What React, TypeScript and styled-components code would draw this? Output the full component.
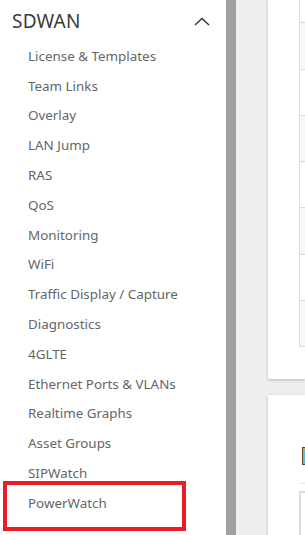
import React from "react";
import styled, { createGlobalStyle } from "styled-components";

const Global = createGlobalStyle`
  html, body { margin: 0; padding: 0; }
  body { font-family: "Noto Sans", "Open Sans", sans-serif; background: #fff; }
  * { box-sizing: border-box; }
`;

const Page = styled.div`
  display: flex;
  width: 305px;
  height: 535px;
  overflow: hidden;
`;

const Sidebar = styled.nav`
  width: 226px;
  flex: none;
  background: #fff;
  display: flex;
  flex-direction: column;
`;

const Header = styled.div`
  height: 41px;
  display: flex;
  align-items: center;
  justify-content: space-between;
  padding: 0 16px 0 12px;
  color: #3a3a3a;
  font-size: 19px;
  letter-spacing: 0.2px;
`;

const Item = styled.div<{ $highlight?: boolean }>`
  position: relative;
  height: 29.8px;
  display: flex;
  align-items: center;
  padding-left: 28px;
  font-size: 13.4px;
  color: #666;
  white-space: nowrap;
  ${(p) =>
    p.$highlight &&
    `
    &::after {
      content: "";
      position: absolute;
      left: 3px;
      width: 175px;
      top: -7px;
      height: 42px;
      border: 4px solid #e81d25;
    }
  `}
`;

const ScrollBar = styled.div`
  width: 10px;
  flex: none;
  background: #a0a0a0;
`;

const Main = styled.main`
  flex: 1;
  background: #eeeeee;
  padding-left: 32px;
  display: flex;
  flex-direction: column;
  gap: 16px;
  min-width: 0;
`;

const Card = styled.section<{ $top: number; $bottom: number; $grow?: boolean }>`
  background: #fff;
  box-shadow: 0 1px 3px rgba(0, 0, 0, 0.22);
  padding: ${(p) => p.$top}px 0 ${(p) => p.$bottom}px 31px;
  display: flex;
  flex-direction: column;
  flex: ${(p) => (p.$grow ? 1 : "none")};
`;

const Table = styled.div`
  border-left: 1px solid #dcdcdc;
  border-bottom: 1px solid #dcdcdc;
  display: flex;
  flex-direction: column;
`;

const Row = styled.div<{ $h: number; $shaded: boolean; $first?: boolean }>`
  height: ${(p) => p.$h}px;
  background: ${(p) => (p.$shaded ? "#f8f8f8" : "#fff")};
  border-top: ${(p) => (p.$first ? "none" : "1px solid #dcdcdc")};
`;

const TitleLine = styled.div`
  display: flex;
  align-items: center;
  height: 18px;
  padding-left: 3px;
  margin-bottom: 18px;
`;

const Divider = styled.div`
  height: 1px;
  background: #e4e4e4;
  margin-left: 1px;
  margin-bottom: 7px;
`;

const OpenTable = styled.div`
  border-left: 2px solid #dcdcdc;
  border-top: 2px solid #dcdcdc;
  height: 60px;
`;

const Chevron = () => (
  <svg width="16" height="9" viewBox="0 0 16 9" style={{ marginTop: 2 }}>
    <polyline points="1,8 8,1.5 15,8" fill="none" stroke="#333" strokeWidth="1.4" />
  </svg>
);

const Logo = () => (
  <svg width="12" height="18" viewBox="0 0 12 18" style={{ flex: "none" }}>
    <rect x="0" y="0" width="12" height="18" fill="#6b4420" />
    <rect x="1" y="1" width="11" height="16" fill="#e59a2e" />
    <rect x="2" y="2" width="10" height="14" fill="#58bde9" />
  </svg>
);

const items = [
  "License & Templates",
  "Team Links",
  "Overlay",
  "LAN Jump",
  "RAS",
  "QoS",
  "Monitoring",
  "WiFi",
  "Traffic Display / Capture",
  "Diagnostics",
  "4GLTE",
  "Ethernet Ports & VLANs",
  "Realtime Graphs",
  "Asset Groups",
  "SIPWatch",
  "PowerWatch",
];

const rows = [
  { h: 22, shaded: false },
  { h: 47, shaded: true },
  { h: 46, shaded: false },
  { h: 46, shaded: true },
  { h: 46, shaded: false },
  { h: 47, shaded: true },
  { h: 46, shaded: false },
  { h: 46, shaded: true },
];

export default function App() {
  return (
    <>
      <Global />
      <Page>
        <Sidebar>
          <Header>
            <span>SDWAN</span>
            <Chevron />
          </Header>
          {items.map((t) => (
            <Item key={t} $highlight={t === "PowerWatch"}>
              {t}
            </Item>
          ))}
        </Sidebar>
        <ScrollBar />
        <Main>
          <Card $top={0} $bottom={32}>
            <Table>
              {rows.map((r, i) => (
                <Row key={i} $h={r.h} $shaded={r.shaded} $first={i === 0} />
              ))}
            </Table>
          </Card>
          <Card $top={52} $bottom={0} $grow>
            <TitleLine>
              <Logo />
            </TitleLine>
            <Divider />
            <OpenTable />
          </Card>
        </Main>
      </Page>
    </>
  );
}
